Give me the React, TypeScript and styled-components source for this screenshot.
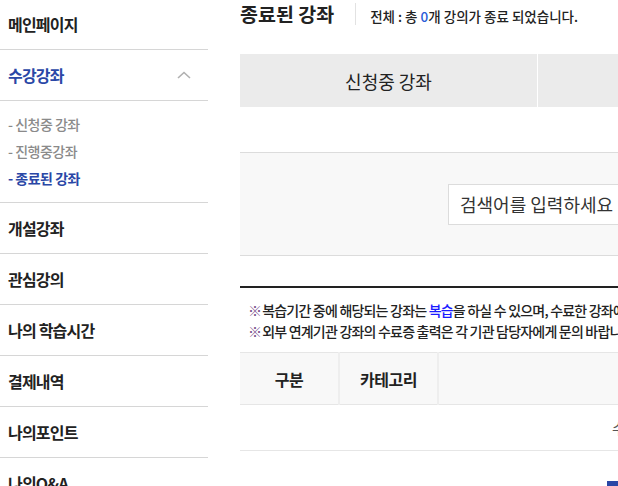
import styled, {createGlobalStyle} from 'styled-components'

const GlobalStyle = createGlobalStyle`
  html, body {
    margin: 0;
    padding: 0;
    background: #fff;
    overflow: hidden;
  }
  body {
    font-family: 'Noto Sans CJK KR', 'Noto Sans', sans-serif;
    color: #222;
  }
  * {
    box-sizing: border-box;
  }
`

const Page = styled.div`
  display: flex;
  align-items: flex-start;
  width: 1200px;
`

const Sidebar = styled.nav`
  flex-shrink: 0;
  width: 208px;
  margin-top: -1px;
`

const MenuItem = styled.div<{$active?: boolean}>`
  display: flex;
  align-items: center;
  justify-content: space-between;
  height: 51px;
  padding: 0 17px 1px 8px;
  border-bottom: 1px solid #d6d6d6;
  font-size: 16px;
  font-weight: 700;
  letter-spacing: -0.8px;
  color: ${(p) => (p.$active ? '#2a47a6' : '#222')};
`

const SubMenu = styled.ul`
  margin: 0;
  padding: 10px 8px 10px;
  list-style: none;
  border-bottom: 1px solid #d6d6d6;
`

const SubItem = styled.li<{$active?: boolean}>`
  height: 27px;
  line-height: 27px;
  font-size: 14px;
  letter-spacing: -0.5px;
  font-weight: ${(p) => (p.$active ? 700 : 500)};
  color: ${(p) => (p.$active ? '#2a47a6' : '#8a8a8a')};
`

const Main = styled.main`
  flex-shrink: 0;
  width: 893px;
  margin-left: 32px;
`

const TitleRow = styled.div`
  display: flex;
  align-items: center;
  height: 28px;
`

const Title = styled.h2`
  margin: 0;
  font-size: 19.5px;
  font-weight: 700;
  line-height: 28px;
  color: #222;
`

const Divider = styled.span`
  width: 1px;
  height: 22px;
  margin: 0 14px 0 21px;
  background: #e2e2e2;
`

const Summary = styled.p`
  margin: 0;
  padding-top: 3px;
  font-size: 13.5px;
  font-weight: 500;
  color: #222;

  b {
    font-weight: 500;
    color: #2a5bd7;
  }
`

const Tabs = styled.div`
  display: grid;
  grid-template-columns: repeat(3, 297px);
  gap: 1px;
  margin-top: 26px;
`

const Tab = styled.div<{$active?: boolean}>`
  display: flex;
  align-items: center;
  justify-content: center;
  height: 53px;
  font-size: 18px;
  background: ${(p) => (p.$active ? '#2a47a6' : '#ebebeb')};
  color: ${(p) => (p.$active ? '#fff' : '#222')};
`

const SearchBox = styled.div`
  display: flex;
  align-items: center;
  justify-content: center;
  gap: 7px;
  height: 104px;
  margin-top: 45px;
  background: #f8f8f8;
  border-top: 1px solid #dcdcdc;
  border-bottom: 1px solid #dcdcdc;
`

const SearchInput = styled.input`
  width: 380px;
  height: 41px;
  padding: 0 11px;
  border: 1px solid #dcdcdc;
  background: #fff;
  font-family: inherit;
  font-size: 18px;
  color: #333;

  &::placeholder {
    color: #333;
  }
`

const SearchButton = styled.button`
  width: 90px;
  height: 41px;
  border: none;
  background: #555;
  color: #fff;
  font-family: inherit;
  font-size: 15px;
`

const Notes = styled.div`
  margin-top: 30px;
  padding: 12px 8px 10px;
  border-top: 2px solid #222;
`

const Note = styled.p`
  margin: 0;
  font-size: 14px;
  font-weight: 500;
  line-height: 21px;
  letter-spacing: -0.8px;
  color: #222;
  white-space: nowrap;

  span {
    margin-right: 1px;
    color: #7a4f8c;
  }

  em {
    font-style: normal;
    color: #1a1aff;
  }
`

const Table = styled.table`
  width: 100%;
  border-collapse: collapse;
`

const Th = styled.th<{$w?: number}>`
  width: ${(p) => (p.$w ? `${p.$w}px` : 'auto')};
  height: 52px;
  padding: 0;
  background: #f8f8f8;
  border-top: 1px solid #e6e6e6;
  border-bottom: 1px solid #e6e6e6;
  border-right: 2px solid #eeeeee;
  font-size: 16px;
  font-weight: 700;
  letter-spacing: -0.5px;
  color: #222;

  &:last-child {
    border-right: none;
  }
`

const EmptyCell = styled.td`
  height: 46px;
  text-align: center;
  border-bottom: 1px solid #e6e6e6;
  font-size: 15px;
  color: #555;
`

const Footer = styled.div`
  display: flex;
  justify-content: center;
  margin-top: 30px;
`

const BlueButton = styled.button`
  width: 160px;
  height: 40px;
  border: none;
  background: #2a47a6;
  color: #fff;
  font-family: inherit;
  font-size: 14px;
`

const ChevronUp = () => (
  <svg width="14" height="8" viewBox="0 0 14 8" fill="none">
    <polyline points="1,7 7,1.5 13,7" stroke="#b0b0b0" strokeWidth="1.6" />
  </svg>
)

const menus = ['개설강좌', '관심강의', '나의 학습시간', '결제내역', '나의포인트', '나의Q&A']

const subMenus = [
  {title: '- 신청중 강좌'},
  {title: '- 진행중강좌'},
  {title: '- 종료된 강좌', active: true},
]

const tabs = [{title: '신청중 강좌'}, {title: '진행중 강좌'}, {title: '종료된 강좌', active: true}]

export default function App() {
  return (
    <>
      <GlobalStyle />
      <Page>
        <Sidebar>
          <MenuItem>메인페이지</MenuItem>
          <MenuItem $active>
            수강강좌
            <ChevronUp />
          </MenuItem>
          <SubMenu>
            {subMenus.map((item, index) => (
              <SubItem key={index} $active={item.active}>
                {item.title}
              </SubItem>
            ))}
          </SubMenu>
          {menus.map((menu, index) => (
            <MenuItem key={index}>{menu}</MenuItem>
          ))}
        </Sidebar>
        <Main>
          <TitleRow>
            <Title>종료된 강좌</Title>
            <Divider />
            <Summary>
              전체 : 총 <b>0</b>개 강의가 종료 되었습니다.
            </Summary>
          </TitleRow>
          <Tabs>
            {tabs.map((tab, index) => (
              <Tab key={index} $active={tab.active}>
                {tab.title}
              </Tab>
            ))}
          </Tabs>
          <SearchBox>
            <SearchInput placeholder="검색어를 입력하세요" />
            <SearchButton>검색</SearchButton>
          </SearchBox>
          <Notes>
            <Note>
              <span>※</span>복습기간 중에 해당되는 강좌는 <em>복습</em>을 하실 수 있으며, 수료한 강좌에 한하여 수료증을 출력하실 수 있습니다.
            </Note>
            <Note>
              <span>※</span>외부 연계기관 강좌의 수료증 출력은 각 기관 담당자에게 문의 바랍니다.
            </Note>
          </Notes>
          <Table>
            <thead>
              <tr>
                <Th $w={99}>구분</Th>
                <Th $w={99}>카테고리</Th>
                <Th>강좌명</Th>
                <Th $w={130}>수강기간</Th>
                <Th $w={100}>수료증</Th>
              </tr>
            </thead>
            <tbody>
              <tr>
                <EmptyCell colSpan={5}>수료된 강좌가 없습니다.</EmptyCell>
              </tr>
            </tbody>
          </Table>
          <Footer>
            <BlueButton>수료증 일괄출력</BlueButton>
          </Footer>
        </Main>
      </Page>
    </>
  )
}
